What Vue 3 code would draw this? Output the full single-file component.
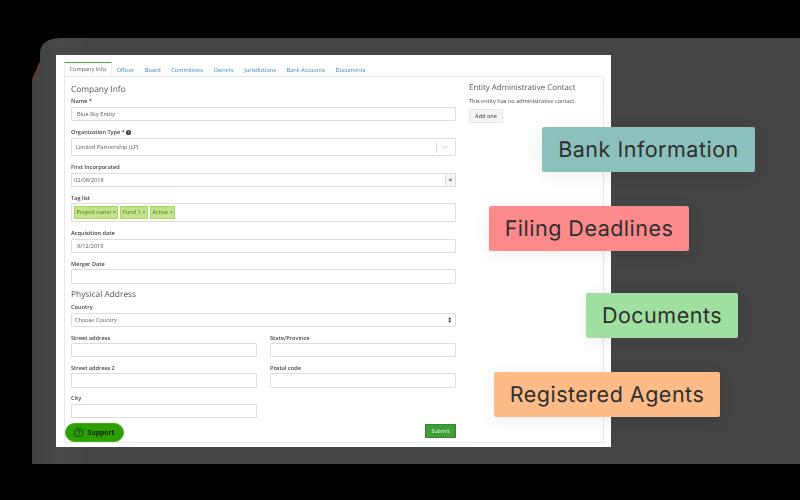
<template>
  <div class="stage">
    <div class="panel">
      <div class="screen">
        <ul class="tabs">
          <li v-for="(tab, index) in tabs" :key="tab" :class="{ active: index === 0 }">{{ tab }}</li>
        </ul>
        <div class="pane">
          <form class="main" @submit.prevent>
            <h3>Company Info</h3>
            <label>Name *</label>
            <input class="control" value="Blue Sky Entity" readonly>

            <label class="gap">Organization Type *
              <svg class="info" viewBox="0 0 10 10"><circle cx="5" cy="5" r="5" fill="#333"/><path d="M3.5 4 C3.5 2.2 6.6 2.2 6.6 4 C6.6 5 5 5 5 6.2 M5 7.2 V8.2" fill="none" stroke="#fff" stroke-width="1.2"/></svg>
            </label>
            <div class="control select-box">
              <span>Limited Partnership (LP)</span>
              <i class="sep"></i>
              <svg class="chevron" viewBox="0 0 10 6"><path d="M1 1 L5 5 L9 1" fill="none" stroke="#aaa" stroke-width="1"/></svg>
            </div>

            <label class="gap">First Incorporated</label>
            <div class="control date-box">
              <span>02/08/2018</span>
              <b class="clear">×</b>
            </div>

            <label class="gap tight">Tag list</label>
            <div class="control tag-box">
              <span v-for="tag in tags" :key="tag" class="tag">{{ tag }} <em>×</em></span>
            </div>

            <label class="gap">Acquisition date</label>
            <input class="control" value="9/12/2019" readonly>

            <label class="gap tight">Merger Date</label>
            <input class="control merger" readonly>

            <h3 class="address">Physical Address</h3>
            <label>Country</label>
            <div class="control select-box plain">
              <span>Choose Country</span>
              <svg class="updown" viewBox="0 0 6 10"><path d="M3 0 L5.5 4 H0.5 Z M3 10 L5.5 6 H0.5 Z" fill="#333"/></svg>
            </div>

            <div class="columns">
              <div>
                <label class="gap tight">Street address</label>
                <input class="control" readonly>
                <label class="gap tight">Street address 2</label>
                <input class="control tall" readonly>
                <label class="gap city">City</label>
                <input class="control" readonly>
              </div>
              <div>
                <label class="gap tight">State/Province</label>
                <input class="control" readonly>
                <label class="gap tight">Postal code</label>
                <input class="control tall" readonly>
              </div>
            </div>

            <div class="actions">
              <button class="submit">Submit</button>
            </div>
          </form>

          <aside class="side">
            <h3>Entity Administrative Contact</h3>
            <p>This entity has no administrative contact.</p>
            <button class="add">Add one</button>
          </aside>
        </div>

        <button class="support">
          <svg viewBox="0 0 12 12"><circle cx="6" cy="6" r="5.2" fill="none" stroke="#10240a" stroke-width="1"/><path d="M4.3 4.7 C4.3 2.7 7.7 2.7 7.7 4.7 C7.7 5.9 6 5.9 6 7.2 M6 8.1 V9.1" fill="none" stroke="#10240a" stroke-width="1"/></svg>
          Support
        </button>
      </div>
    </div>

    <svg class="red-line" viewBox="0 0 10 20"><path d="M8 0 L0.5 18" stroke="#d11f1f" stroke-width="0.7" fill="none"/></svg>

    <div v-for="badge in badges" :key="badge.text" class="badge" :class="badge.cls">{{ badge.text }}</div>
  </div>
</template>

<script setup>
const tabs = ['Company Info', 'Officer', 'Board', 'Committees', 'Owners', 'Jurisdictions', 'Bank Accounts', 'Documents']
const tags = ['Project name', 'Fund 1', 'Active']
const badges = [
  { text: 'Bank Information', cls: 'bank' },
  { text: 'Filing Deadlines', cls: 'filing' },
  { text: 'Documents', cls: 'docs' },
  { text: 'Registered Agents', cls: 'agents' }
]
</script>

<style>
html, body {
  margin: 0;
  background: #000;
}
</style>

<style scoped>
.stage {
  position: relative;
  width: 800px;
  height: 500px;
  overflow: hidden;
  background: #000;
  font-family: "Open Sans", "Liberation Sans", sans-serif;
  color: #444;
  text-rendering: geometricPrecision;
}

.panel {
  box-sizing: border-box;
  width: 768px;
  height: 426px;
  margin-left: 32px;
  position: relative;
  top: 38px;
  padding: 17px 189px 17px 24px;
  background: linear-gradient(90deg, #3e4241 0, #474948 24px, #444 60px);
  clip-path: path("M8 15 Q8 0 31 0 L768 0 L768 426 L0 426 L0 42 L8 24 Z");
}

.screen {
  position: relative;
  box-sizing: border-box;
  width: 555px;
  height: 392px;
  padding: 7px 7px 4px 8px;
  background: #fff;
}

.tabs {
  display: flex;
  height: 14px;
  margin: 0;
  padding: 0;
  list-style: none;
  font-size: 5.6px;
  line-height: 14px;
  color: #2b7fc0;
  filter: blur(0.25px);
}

.tabs li {
  padding: 1px 4.6px 0;
  margin-right: 1.4px;
  white-space: nowrap;
}

.tabs li.active {
  padding: 0 4.5px;
  margin-right: 0.6px;
  border-top: 1.5px solid #55a94a;
  border-left: 1px solid #eee;
  border-right: 1px solid #eee;
  background: #fff;
  color: #555;
  position: relative;
  z-index: 1;
  line-height: 13px;
  height: 14.5px;
  box-sizing: border-box;
}

.pane {
  box-sizing: border-box;
  display: flex;
  height: 367px;
  border: 1px solid #e9e9e9;
  padding: 7px 0 0 6px;
  filter: blur(0.25px);
}

.main {
  width: 385px;
  flex: none;
}

h3 {
  margin: 0 0 3px;
  font-size: 8.4px;
  line-height: 10px;
  font-weight: 400;
  color: #555;
}

.main h3:first-child {
  padding-top: 1px;
  margin-bottom: 2px;
}

h3.address {
  margin: 6px 0 3px;
}

label {
  display: block;
  height: 8px;
  margin-bottom: 2px;
  font-size: 5.6px;
  line-height: 8px;
  font-weight: 600;
  color: #444;
  white-space: nowrap;
}

label.gap {
  margin-top: 7px;
}

label.tight {
  margin-bottom: 1px;
}

label.city {
  margin-top: 6px;
}

.info {
  width: 5px;
  height: 5px;
  vertical-align: -0.5px;
}

.control {
  display: flex;
  align-items: center;
  box-sizing: border-box;
  width: 100%;
  height: 14px;
  margin: 0;
  padding: 0 5px;
  border: 1px solid #ddd;
  border-radius: 1px;
  outline: none;
  background: #fff;
  font-family: inherit;
  font-size: 5.6px;
  color: #555;
}

.control.tall {
  height: 15px;
}

.control.merger {
  height: 15px;
}

.select-box {
  height: 18px;
  padding-left: 4px;
}

.select-box span, .date-box span {
  flex: 1;
}

.select-box.plain {
  height: 14px;
  padding-left: 3px;
}

.sep {
  width: 1px;
  height: 11px;
  margin-right: 5px;
  background: #ddd;
}

.chevron {
  width: 6px;
  height: 4px;
  margin-right: 2px;
}

.updown {
  width: 3.5px;
  height: 6px;
  margin-right: -1px;
}

.date-box {
  padding: 0 0 0 2px;
}

.clear {
  width: 9px;
  height: 100%;
  border-left: 1px solid #ddd;
  background: #f4f4f4;
  text-align: center;
  font-size: 6px;
  line-height: 12px;
  color: #333;
}

.tag-box {
  gap: 2px;
  height: 19px;
  padding: 0 2px;
}

.tag {
  box-sizing: border-box;
  height: 13px;
  padding: 0 1.6px;
  border: 1px solid #a5d85c;
  background: #c3e488;
  line-height: 11px;
  color: #4b6a22;
  white-space: nowrap;
}

.tag em {
  margin-left: 0.3px;
  font-size: 5px;
  font-style: normal;
  font-weight: 700;
  color: #2b6fc0;
}

.columns {
  display: grid;
  grid-template-columns: 186px 186px;
  column-gap: 13px;
}

.actions {
  display: flex;
  justify-content: flex-end;
  margin-top: 6px;
}

button {
  font-family: inherit;
  cursor: pointer;
}

.submit {
  width: 31px;
  height: 14px;
  padding: 0;
  border: 1px solid #2f8a2a;
  background: #3f9f38;
  color: #eef7ea;
  font-size: 5.4px;
}

.side {
  margin-left: 13px;
}

.side h3 {
  margin: 0;
  line-height: 9px;
  font-size: 7.9px;
  white-space: nowrap;
}

.side p {
  margin: 4px 0 0;
  font-size: 5.6px;
  line-height: 8px;
  color: #444;
  white-space: nowrap;
}

.add {
  display: block;
  width: 34px;
  height: 14px;
  margin-top: 4px;
  padding: 0;
  border: 1px solid #e6e6e6;
  background: #f4f4f4;
  color: #333;
  font-size: 5.6px;
}

.support {
  position: absolute;
  left: 9px;
  top: 368px;
  display: flex;
  align-items: center;
  gap: 4px;
  box-sizing: border-box;
  width: 59px;
  height: 19px;
  padding: 0 0 0 8px;
  border: 1px solid #3bb012;
  border-radius: 10px;
  background: #2e9f03;
  color: #10240a;
  font-size: 6.8px;
  font-weight: 700;
  filter: blur(0.2px);
}

.support svg {
  width: 9.5px;
  height: 9.5px;
}

.red-line {
  position: absolute;
  left: 31.5px;
  top: 62px;
  width: 10px;
  height: 20px;
}

.badge {
  position: absolute;
  box-sizing: border-box;
  display: flex;
  align-items: center;
  justify-content: center;
  height: 45px;
  border-radius: 2px;
  font-family: "Inter", "DejaVu Sans", sans-serif;
  font-size: 21.5px;
  letter-spacing: 0.5px;
  font-weight: 400;
  color: #2d2f2f;
  white-space: nowrap;
  box-shadow: 0 3px 16px rgba(0, 0, 0, 0.08);
}

.bank {
  left: 542px;
  top: 127px;
  width: 213px;
  background: #8cc0bb;
}

.filing {
  left: 489px;
  top: 206px;
  width: 200px;
  background: #fd8a8a;
}

.docs {
  left: 586px;
  top: 293px;
  width: 152px;
  background: #9fe0a0;
}

.agents {
  left: 494px;
  top: 372px;
  width: 226px;
  background: #fdbb87;
}
</style>
